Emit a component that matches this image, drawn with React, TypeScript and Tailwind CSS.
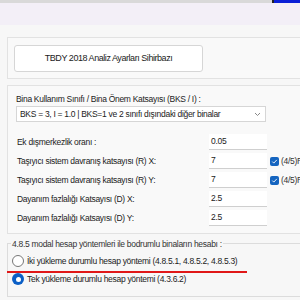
export default function App() {
  const font = { fontFamily: '"Liberation Sans", Arial, sans-serif' }
  return (
    <div className="w-[300px] h-[300px] overflow-hidden bg-[#f7f7f7] text-[#222]" style={font}>
      <div className="flex h-[3px] bg-[#d9d9d9]">
        <div className="flex-1" />
        <div className="w-[28px] bg-[#0a1fd6] border-l-2 border-[#222]" />
      </div>
      <div className="h-[22px] bg-[#f3eff7]" />
      <div className="w-[330px] pl-[7px] pt-[12px] flex flex-col gap-[6px]">
        <div className="border border-[#e2e2e2] bg-[#f9f9f9] px-[6px] py-[6px]">
          <button className="w-[189px] h-[27px] bg-white border border-[#d6d6d6] rounded-[3px] text-[9px] tracking-[-0.45px] text-[#222]">
            TBDY 2018 Analiz Ayarları Sihirbazı
          </button>
        </div>
        <div className="border border-[#e2e2e2] bg-[#f9f9f9] pl-[8px] pt-[7px] pb-[7px] text-[8.5px] tracking-[-0.3px]">
          <div className="leading-[12px]">Bina Kullanım Sınıfı / Bina Önem Katsayısı (BKS / I) :</div>
          <div className="mt-[1px] w-[250px] h-[16px] bg-white border border-[#d6d6d6] flex items-center pl-[3px] pr-[4px]">
            <span className="flex-1 whitespace-nowrap">BKS = 3, I = 1.0 | BKS=1 ve 2 sınıfı dışındaki diğer binalar</span>
            <svg width="7" height="5" viewBox="0 0 7 5" className="text-[#888]">
              <path d="M1 1l2.5 2.5L6 1" fill="none" stroke="currentColor" strokeWidth="1" />
            </svg>
          </div>
          <div className="mt-[12px] flex flex-col gap-[3px]">
            {[
              ["Ek dışmerkezlik oranı :", "0.05", false],
              ["Taşıyıcı sistem davranış katsayısı (R) X:", "7", true],
              ["Taşıyıcı sistem davranış katsayısı (R) Y:", "7", true],
              ["Dayanım fazlalığı Katsayısı (D) X:", "2.5", false],
              ["Dayanım fazlalığı Katsayısı (D) Y:", "2.5", false],
            ].map(([label, value, check]) => (
              <div key={label as string} className="flex items-center h-[16px]">
                <span className="w-[193px] pl-[1px] whitespace-nowrap">{label}</span>
                <div className="w-[58px] h-[16px] bg-white border-b border-[#cfcfcf] pl-[2px] flex items-center">{value}</div>
                {check && (
                  <div className="ml-[3px] flex items-center gap-[2px] whitespace-nowrap">
                    <div className="w-[9px] h-[9px] rounded-[2px] bg-[#1565c0] flex items-center justify-center">
                      <svg width="7" height="7" viewBox="0 0 7 7">
                        <path d="M1.3 3.6l1.5 1.5 3-3.2" fill="none" stroke="white" strokeWidth="0.9" />
                      </svg>
                    </div>
                    <span className="text-[#333]">(4/5)R</span>
                  </div>
                )}
              </div>
            ))}
          </div>
        </div>
        <div className="relative mt-[3px] border border-[#dcdcdc] h-[54px] text-[8.5px] tracking-[-0.3px]">
          <div className="absolute -top-[6px] left-[3px] bg-[#f7f7f7] px-[1px] leading-[12px] text-[#333]">
            4.8.5 modal hesap yöntemleri ile bodrumlu binaların hesabı :
          </div>
          <div className="pl-[4px] pt-[11px] flex flex-col gap-[6px]">
            <div className="flex items-center gap-[3px] h-[12px]">
              <div className="w-[12px] h-[12px] rounded-full border border-[#777] bg-white" />
              <span>İki yükleme durumlu hesap yöntemi (4.8.5.1, 4.8.5.2, 4.8.5.3)</span>
            </div>
            <div className="flex items-center gap-[3px] h-[12px]">
              <div className="w-[12px] h-[12px] rounded-full bg-[#0b5fc6] flex items-center justify-center">
                <div className="w-[5px] h-[5px] rounded-full bg-white" />
              </div>
              <span>Tek yükleme durumlu hesap yöntemi (4.3.6.2)</span>
            </div>
          </div>
          <div className="absolute left-[-1px] top-[27px] w-[240px] h-[2px] bg-[#e01818]" />
        </div>
      </div>
    </div>
  )
}
